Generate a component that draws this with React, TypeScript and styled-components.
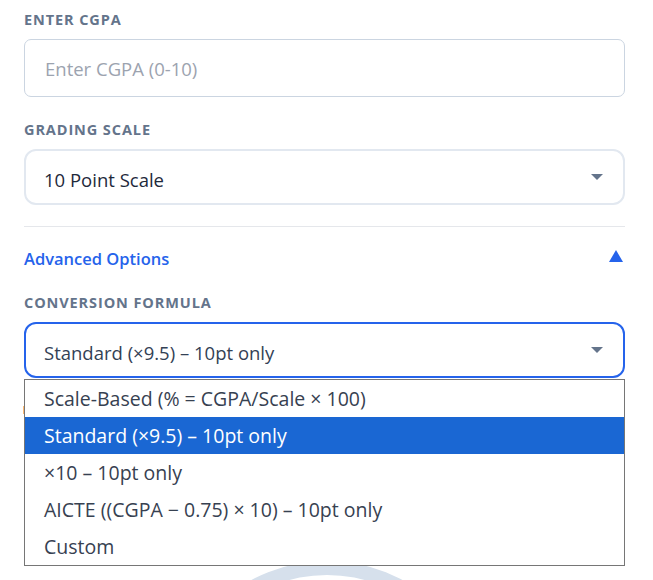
import React, { useState } from 'react';
import styled, { createGlobalStyle } from 'styled-components';

const GlobalStyle = createGlobalStyle`
  * { box-sizing: border-box; }
  body {
    margin: 0;
    background: #ffffff;
    font-family: "Open Sans", "Noto Sans", "Liberation Sans", sans-serif;
    color: #1e293b;
    overflow: hidden;
  }
`;

const Panel = styled.div`
  padding: 11px 28px 0 24px;
  display: flex;
  flex-direction: column;
`;

const Field = styled.div`
  display: flex;
  flex-direction: column;
  gap: 10px;
  margin-bottom: 24px;
  position: relative;
`;

const Label = styled.label`
  font-size: 14.5px;
  line-height: 18px;
  font-weight: 700;
  letter-spacing: 0.9px;
  text-transform: uppercase;
  color: #64748b;
`;

const TextInput = styled.input`
  height: 58px;
  width: 100%;
  border: 1px solid #cbd5e1;
  border-radius: 7px;
  padding: 0 20px;
  font-family: inherit;
  font-size: 18.5px;
  color: #1e293b;
  outline: none;

  &::placeholder { color: #9ca3af; }
`;

const SelectBox = styled.div<{ $open?: boolean }>`
  height: 56px;
  border: 2px solid ${p => (p.$open ? '#2563eb' : '#e2e8f0')};
  border-radius: 12px;
  padding: 4px 20px 0 18px;
  display: flex;
  align-items: center;
  justify-content: space-between;
  font-size: 18.5px;
  color: ${p => (p.$open ? '#334155' : '#1e293b')};
  cursor: pointer;
  background: #fff;
`;

const Caret = styled.span`
  width: 0;
  height: 0;
  border-left: 6px solid transparent;
  border-right: 6px solid transparent;
  border-top: 6px solid #64748b;
  margin-top: -4px;
`;

const Divider = styled.hr`
  border: none;
  border-top: 1px solid #e5e7eb;
  margin: -3px 0 0;
`;

const AdvancedToggle = styled.button`
  display: flex;
  align-items: center;
  justify-content: space-between;
  background: none;
  border: none;
  padding: 0 2px 0 0;
  margin: 19px 0 24px;
  height: 24px;
  font-family: inherit;
  font-size: 16.5px;
  font-weight: 600;
  color: #2563eb;
  cursor: pointer;
`;

const UpTriangle = styled.span`
  width: 0;
  height: 0;
  border-left: 7px solid transparent;
  border-right: 7px solid transparent;
  border-bottom: 12px solid #2563eb;
  margin-top: -4px;
`;

const OptionList = styled.ul`
  position: absolute;
  top: calc(100% + 1px);
  left: 0;
  right: 0;
  margin: 0;
  padding: 0;
  list-style: none;
  background: #fff;
  border: 1px solid #767676;
  z-index: 10;
`;

const Option = styled.li<{ $selected?: boolean }>`
  height: 37px;
  display: flex;
  align-items: center;
  padding: 0 19px;
  font-size: 19.5px;
  background: ${p => (p.$selected ? '#1a67d3' : '#fff')};
  color: ${p => (p.$selected ? '#fff' : '#374151')};
`;

const Hint = styled.div`
  margin: 4px 0 0 -1px;
  height: 8px;
  border-left: 3px solid #fdba74;
  background: #fff7ed;
`;

const RingWrap = styled.div`
  display: flex;
  justify-content: center;
  margin-top: 147px;
  margin-right: -4px;
`;

const formulas = [
  'Scale-Based (% = CGPA/Scale × 100)',
  'Standard (×9.5) – 10pt only',
  '×10 – 10pt only',
  'AICTE ((CGPA − 0.75) × 10) – 10pt only',
  'Custom',
];

export default function App() {
  const [formula, setFormula] = useState(1);
  const [open, setOpen] = useState(true);

  return (
    <>
      <GlobalStyle />
      <Panel>
        <Field>
          <Label>Enter CGPA</Label>
          <TextInput placeholder="Enter CGPA (0-10)" />
        </Field>

        <Field>
          <Label>Grading Scale</Label>
          <SelectBox>
            <span>10 Point Scale</span>
            <Caret />
          </SelectBox>
        </Field>

        <Divider />

        <AdvancedToggle>
          <span>Advanced Options</span>
          <UpTriangle />
        </AdvancedToggle>

        <Field>
          <Label>Conversion Formula</Label>
          <SelectBox $open={open} onClick={() => setOpen(!open)}>
            <span>{formulas[formula]}</span>
            <Caret />
          </SelectBox>
          {open && (
            <OptionList>
              {formulas.map((f, i) => (
                <Option
                  key={f}
                  $selected={i === formula}
                  onClick={() => {
                    setFormula(i);
                    setOpen(false);
                  }}
                >
                  {f}
                </Option>
              ))}
            </OptionList>
          )}
        </Field>

        <Hint />

        <RingWrap>
          <svg width="320" height="320" viewBox="0 0 320 320">
            <circle cx="160" cy="160" r="153" fill="none" stroke="#d6e0ec" strokeWidth={14} />
          </svg>
        </RingWrap>
      </Panel>
    </>
  );
}
